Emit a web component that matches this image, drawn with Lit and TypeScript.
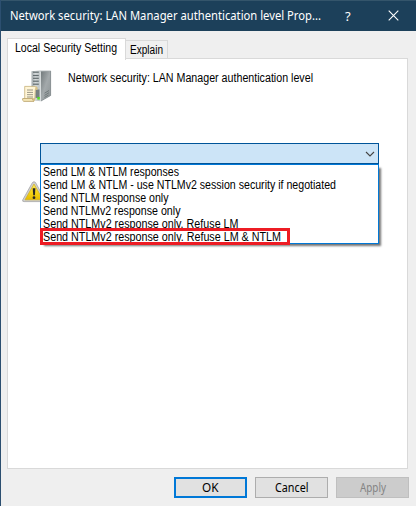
import { LitElement, html, css, svg } from "lit";
import { customElement } from "lit/decorators.js";

// A single line of text set to an exact advance width.
const label = (text: string, width: number) => html`
  <svg class="label" width=${width} height="16" viewBox="0 0 ${width} 16">
    <text x="0" y="12" textLength=${width} lengthAdjust="spacingAndGlyphs">${text}</text>
  </svg>`;

const OPTIONS: [string, number][] = [
  ["Send LM & NTLM responses", 136],
  ["Send LM & NTLM - use NTLMv2 session security if negotiated", 293],
  ["Send NTLM response only", 125.5],
  ["Send NTLMv2 response only", 137.5],
  ["Send NTLMv2 response only. Refuse LM", 195.5],
  ["Send NTLMv2 response only. Refuse LM & NTLM", 238],
];

const BUTTONS: [string, number, string][] = [
  ["OK", 16.5, "default"],
  ["Cancel", 33.5, ""],
  ["Apply", 26, "disabled"],
];

@customElement("server-icon")
class ServerIcon extends LitElement {
  static styles = css`:host, svg { display: block; }`;
  render() {
    return html`<svg width="30" height="33" viewBox="0 0 30 33">
      <defs>
        <linearGradient id="side" x1="0" x2="1" y1="0" y2="1">
          <stop offset="0" stop-color="#6f7779"/><stop offset=".5" stop-color="#a3a9ab"/><stop offset="1" stop-color="#8d9496"/>
        </linearGradient>
        <linearGradient id="front" x1="0" x2="1">
          <stop offset="0" stop-color="#a5acaf"/><stop offset=".4" stop-color="#d5dadb"/><stop offset="1" stop-color="#b9c0c2"/>
        </linearGradient>
      </defs>
      <path d="M9.5 1.2 18 .5H28.8V25.5L18.5 31.3 9.5 30Z" fill="#b9bfc1"/>
      <path d="M18.5 1.5 28.5 1V25.5L18.5 31Z" fill="url(#side)"/>
      <path d="M9.8 1.2H18.5V31L9.8 30Z" fill="url(#front)"/>
      <path d="M18.3 1.5V31" stroke="#e9eded" stroke-width=".9"/>
      ${[2.2, 5.5, 8.3, 11.2, 14.2].map((y) => svg`<path d="M11 ${y}H16.8" stroke="#626c6f" stroke-width="1.2"/>`)}
      <path d="M22.5 23.2 27 20.5M22.5 25.4 27 22.7M22.5 27.4 26.5 25" stroke="#666e70" stroke-width=".8"/>
      <path d="M28.6 1V25.5L19 31" stroke="#798184" stroke-width=".7" fill="none"/>
      <path d="M13.5 19.5H17.5V28H13.5Z" fill="#778080"/>
      <rect x="15.3" y="27" width="2.5" height="2.6" fill="#55df22"/>
      <path d="M2.7 16.4H13.4Q15.6 16.4 15.2 19.4H13.3L12.8 29H2.7Z" fill="#fff5d6" stroke="#c6b17a" stroke-width=".8"/>
      <path d="M13.2 19.4Q12.9 17 14 16.7 15.7 17 15.2 19.4Z" fill="#dbc387"/>
      <path d="M5 20H11M5 22.4H11M5 24.7H11M5 27H11" stroke="#8f8c7e" stroke-width=".9"/>
      <path d="M.7 28.5H10.7Q10.2 30.4 12 31.4H1.8Q0 30.6 .7 28.5Z" fill="#f5e5b5" stroke="#b8a16a" stroke-width=".8"/>
      <path d="M10.8 28.8Q10.4 31.4 12 31.4 13.7 31 13.2 28Z" fill="#d5bd82"/>
    </svg>`;
  }
}

@customElement("warning-icon")
class WarningIcon extends LitElement {
  static styles = css`:host, svg { display: block; }`;
  render() {
    return html`<svg width="24" height="22" viewBox="0 0 24 22">
      <defs><linearGradient id="y" x1="0" x2="0" y1="0" y2="1">
        <stop offset="0" stop-color="#fbe967"/><stop offset=".5" stop-color="#f6d519"/><stop offset="1" stop-color="#e6bb00"/>
      </linearGradient></defs>
      <path d="M12 .8Q13.2 .8 13.8 2L23 18.8Q23.5 20.6 21.5 20.6H2Q0 20.6 .8 18.8L10.2 2Q10.8 .8 12 .8Z" fill="#d0d0d0" stroke="#a6a6a6" stroke-width=".8"/>
      <path d="M12 3 21 18.8H3Z" fill="url(#y)" stroke="#cfae1f" stroke-width=".7" stroke-linejoin="round"/>
      <path d="M10.7 7.2H13.4L12.9 14.2H11.2Z" fill="#262626"/>
      <circle cx="12" cy="16.7" r="1.4" fill="#262626"/>
    </svg>`;
  }
}

@customElement("app-root")
class AppRoot extends LitElement {
  static styles = css`
    * { box-sizing: border-box; }
    :host {
      box-sizing: border-box;
      display: flex; flex-direction: column; width: 416px; height: 506px;
      background: #efefef; border-left: 1px solid #2c4f70; overflow: hidden;
      font: 12px "Liberation Sans", Arial, sans-serif; color: #000;
    }
    .label { display: block; flex: none; overflow: visible; fill: currentColor; }
    .titlebar {
      height: 31px; flex: none; display: flex; align-items: center; padding-left: 9px;
      background: #1c405a; border-top: 1px solid #34556b; color: #fff;
      font-family: "Noto Sans", "Open Sans", sans-serif;
    }
    .help { margin-left: 24px; font-size: 13px; }
    .close { margin-left: 37px; margin-top: -1px; display: block; }
    .tabs { display: flex; align-items: flex-end; height: 28px; flex: none; padding-left: 6px; }
    .tab { border: 1px solid #d9d9d9; border-bottom: 0; background: #f0f0f0; display: flex; }
    .tab.active {
      width: 119px; height: 22px; padding: 1px 0 0 7px; background: #fff;
      position: relative; z-index: 1; margin-bottom: -1px;
    }
    .tab.other { width: 42px; height: 19px; padding: 1px 0 0 4px; border-left: 0; }
    .panel {
      flex: none; width: 401px; height: 411px; margin-left: 6px; margin-top: -1px;
      border: 1px solid #d9d9d9; background: #fff;
    }
    .heading { display: flex; padding: 11px 0 0 14px; height: 84px; }
    .heading .label { margin-left: 16px; }
    .field { display: flex; align-items: flex-start; padding-left: 14px; }
    .warn { margin-top: 38px; width: 18px; overflow: hidden; }
    .dropdown { width: 339px; }
    .combo {
      height: 21px; background: #cce4f7; border: 1px solid #005499;
      display: flex; justify-content: flex-end; align-items: center; padding-right: 3px;
    }
    .list {
      height: 80px; border: 1px solid #0078d7; background: #fff; padding-left: 2px;
      box-shadow: 3px 3px 2px -1px rgba(0,0,0,.55); position: relative;
    }
    .option { height: 13px; display: flex; align-items: flex-start; }
    .option .label { margin-top: -1px; }
    .mark {
      position: absolute; left: -1px; top: 63px; width: 250px; height: 17px;
      border: 3px solid #ed1c24;
    }
    .buttons { display: flex; justify-content: flex-end; gap: 8px; padding: 8px 7px 0 0; }
    .button {
      width: 73px; height: 21px; background: #e1e1e1; border: 1px solid #adadad;
      display: flex; align-items: center; justify-content: center;
      font: 12px "Noto Sans", sans-serif;
    }
    .default { border: 2px solid #0078d7; }
    .disabled { background: #ccc; border-color: #bfbfbf; color: #838383; }
  `;

  render() {
    return html`
      <div class="titlebar">
        ${label("Network security: LAN Manager authentication level Prop...", 311)}
        <span class="help">?</span>
        <svg class="close" width="11" height="11" viewBox="0 0 11 11">
          <path d="M.7 .7 10.3 10.3M10.3 .7 .7 10.3" stroke="#fff" stroke-width="1.1"/>
        </svg>
      </div>
      <div class="tabs">
        <div class="tab active">${label("Local Security Setting", 102)}</div>
        <div class="tab other">${label("Explain", 33)}</div>
      </div>
      <div class="panel">
        <div class="heading">
          <server-icon></server-icon>
          ${label("Network security: LAN Manager authentication level", 245)}
        </div>
        <div class="field">
          <warning-icon class="warn"></warning-icon>
          <div class="dropdown">
            <div class="combo">
              <svg width="10" height="6" viewBox="0 0 10 6"><path d="M1 1 5 5 9 1" fill="none" stroke="#444" stroke-width="1.1"/></svg>
            </div>
            <div class="list">
              ${OPTIONS.map(([text, width]) => html`<div class="option">${label(text, width)}</div>`)}
              <div class="mark"></div>
            </div>
          </div>
        </div>
      </div>
      <div class="buttons">
        ${BUTTONS.map(([text, width, cls]) => html`<div class="button ${cls}">${label(text, width)}</div>`)}
      </div>
    `;
  }
}
